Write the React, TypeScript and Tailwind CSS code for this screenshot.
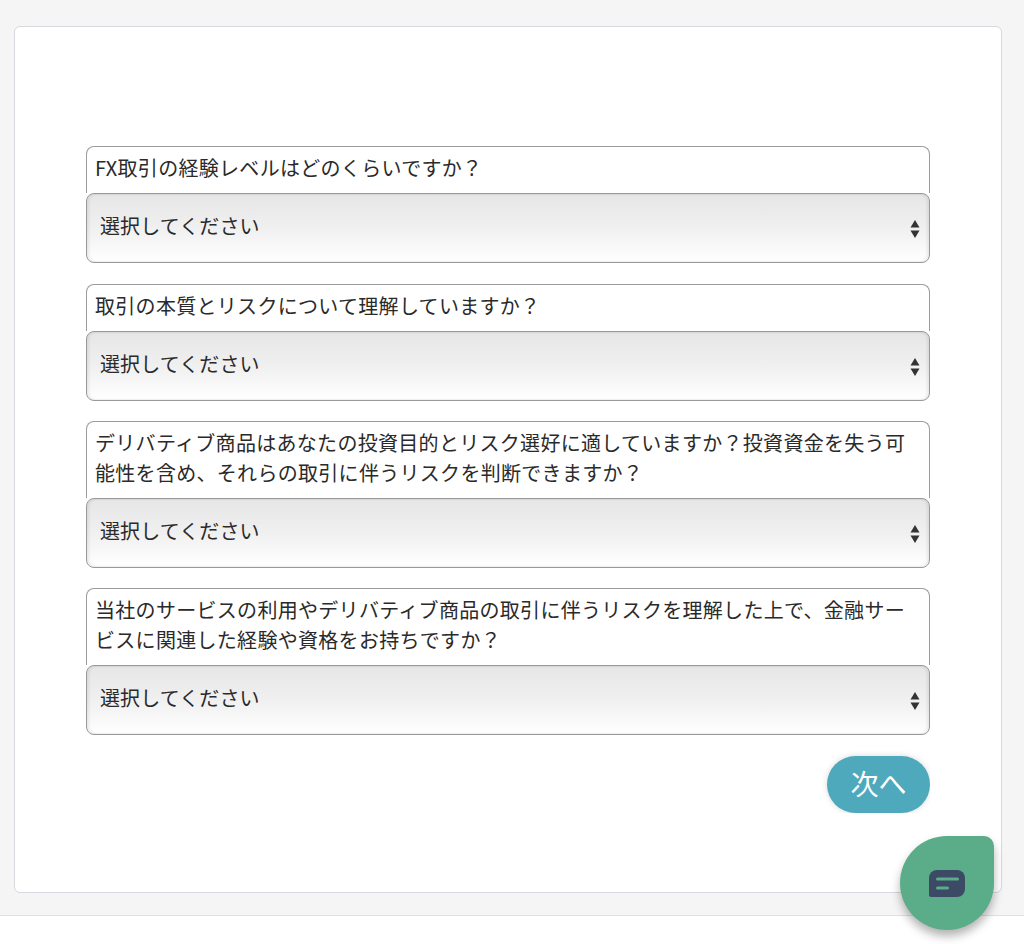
const FONT = '"Noto Sans CJK JP", sans-serif';

const QUESTIONS = [
  'FX取引の経験レベルはどのくらいですか？',
  '取引の本質とリスクについて理解していますか？',
  'デリバティブ商品はあなたの投資目的とリスク選好に適していますか？投資資金を失う可能性を含め、それらの取引に伴うリスクを判断できますか？',
  '当社のサービスの利用やデリバティブ商品の取引に伴うリスクを理解した上で、金融サービスに関連した経験や資格をお持ちですか？',
];

function Question({ text }: { text: string }) {
  return (
    <div className="flex flex-col">
      <div className="rounded-t-[8px] border border-b-0 border-[#9c9c9c] bg-white pl-2 pr-5 pt-[6px] pb-[10px] text-[20px] leading-[30px] tracking-[0.3px] text-[#2a2a2a]">
        {text}
      </div>
      <div className="relative h-[70px] rounded-[8px] border border-[#999999] bg-gradient-to-b from-[#e6e6e6] via-[#f0f0f0] to-white pl-[13px] pt-[17px] text-[20px] leading-[30px] tracking-[0.1px] text-[#2a2a2a] shadow-[inset_2px_0_3px_rgba(0,0,0,0.08),inset_-2px_0_3px_rgba(0,0,0,0.08)]">
        選択してください
        <svg className="absolute right-[9px] top-[25px]" width="10" height="20" viewBox="0 0 10 20">
          <path d="M5 1 L9.5 8.5 H0.5 Z" fill="#333333" />
          <path d="M0.5 11.5 H9.5 L5 19 Z" fill="#333333" />
        </svg>
      </div>
    </div>
  );
}

export default function App() {
  return (
    <div className="relative flex h-[944px] flex-col overflow-hidden bg-white" style={{ fontFamily: FONT }}>
      <div className="h-[916px] border-b border-[#e0e0e4] bg-[#f5f5f5] pl-[14px] pr-[22px] pt-[26px]">
        <div className="flex h-[867px] flex-col rounded-[6px] border border-[#d8d8de] bg-white px-[71px] pt-[119.2px]">
          <div className="flex flex-col gap-[20.4px]">
            {QUESTIONS.map((q) => (
              <Question key={q} text={q} />
            ))}
          </div>
          <div className="mt-[14.6px] flex justify-end overflow-hidden pt-[6px]">
            <button className="h-[57px] w-[103px] rounded-full bg-[#4fa9bd] pb-[3px] text-[28px] text-white shadow-[0_0_6px_rgba(0,0,0,0.15)]">次へ</button>
          </div>
        </div>
      </div>
      <div className="absolute left-[900px] top-[836px] flex h-[94px] w-[94px] items-center justify-center rounded-[47px] rounded-tr-[10px] bg-[#5bac88] shadow-[0_6px_10px_rgba(0,0,0,0.3)]">
        <svg className="mt-px" width="36" height="27" viewBox="0 0 36 27">
          <path d="M0 8 A8 8 0 0 1 8 0 H28 A8 8 0 0 1 36 8 V19 A8 8 0 0 1 28 27 H2 A2 2 0 0 1 0 25 Z" fill="#3c4a66" />
          <rect x="7" y="7.5" width="23" height="3" rx="1.5" fill="#5bac88" />
          <rect x="7" y="16.5" width="13" height="3" rx="1.5" fill="#5bac88" />
        </svg>
      </div>
    </div>
  );
}
